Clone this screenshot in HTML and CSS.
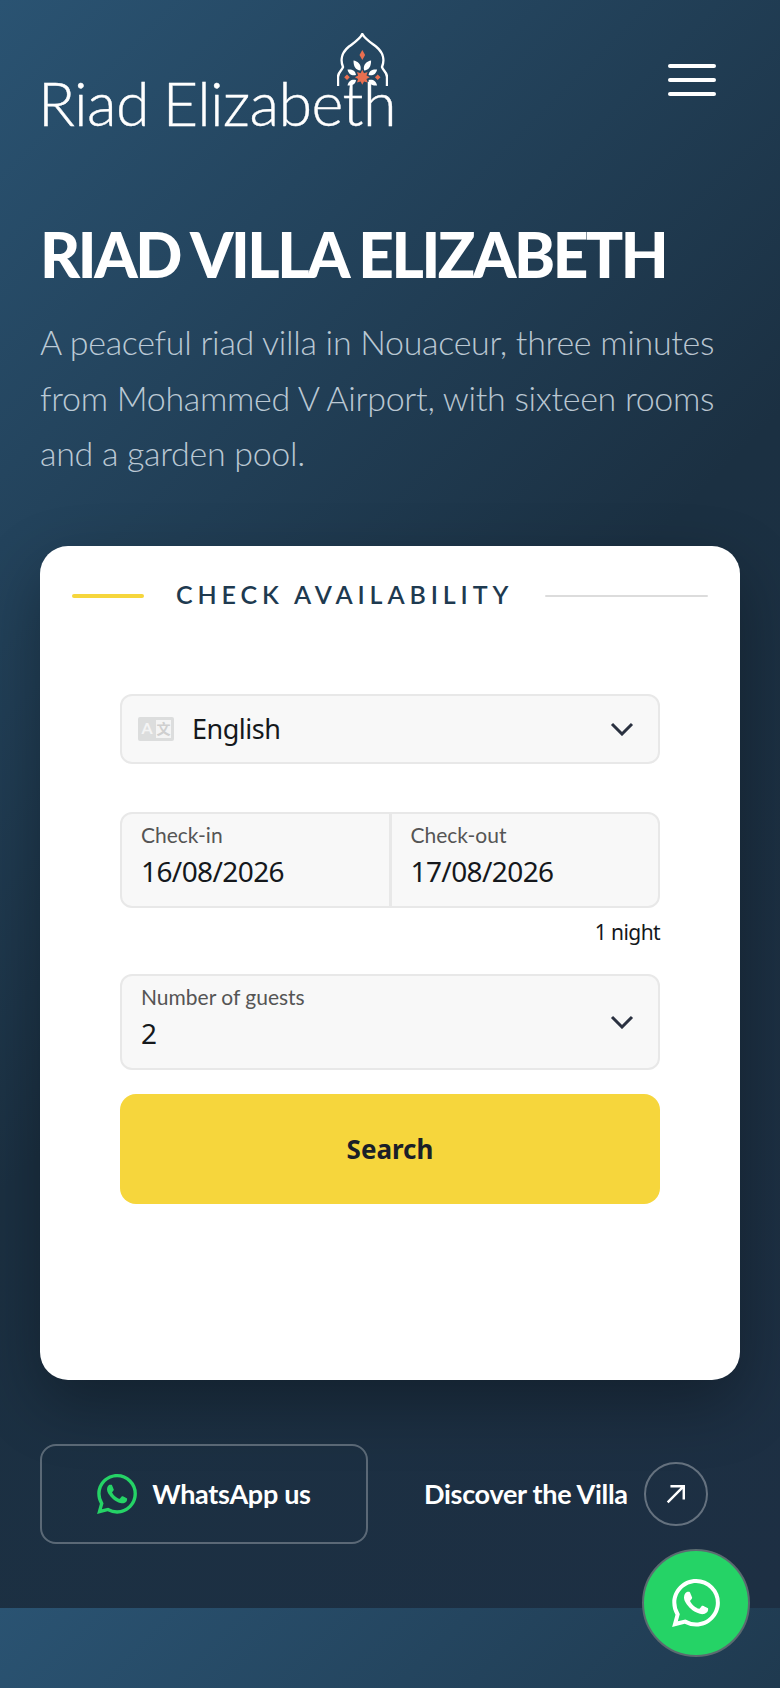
FILE: index.html
```html
<!DOCTYPE html>
<html lang="en">
<head>
<meta charset="utf-8">
<title>Riad Villa Elizabeth</title>
<link rel="stylesheet" href="styles.css">
</head>
<body>
<section class="hero">
  <header class="topbar">
    <a class="logo">
      <span class="logo-text">Riad Elizabeth</span>
      <svg class="logo-mark" viewBox="0 0 51 54" aria-hidden="true">
        <path d="M1 53V44C1 39 5 38 6 34C3.500 28 4 20 12 13.500C18 9 23 6 25.300 1C28 6 33 9 39 13.500C47 20 47.500 28 45 34C46 38 50 39 50 44V53" fill="none" stroke="#fff" stroke-width="2.400"/>
        <path d="M25.300 17l2.800 5-2.800 5-2.800-5z" fill="#e96f50"/>
        <polygon transform="translate(25.300 44.300)" fill="#e96f50" points="7.500,0 4.160,1.720 5.300,5.300 1.720,4.160 0,7.500 -1.720,4.160 -5.300,5.300 -4.160,1.720 -7.500,0 -4.160,-1.720 -5.300,-5.300 -1.720,-4.160 0,-7.500 1.720,-4.160 5.300,-5.300 4.160,-1.720"/>
        <path d="M7.200 44.300l2.800-2.800 2.800 2.800-2.800 2.800zM37.900 44.300l2.800-2.800 2.800 2.800-2.800 2.800z" fill="#e96f50"/>
        <path d="M23.500 37.500c-5-.5-7-4-7-10 4 .5 8.500 4 7 10zM27.100 37.500c-1.500-6 3-9.500 7-10 0 6-2 9.500-7 10zM19 42c-4 1-7.500-.5-8.500-5.500 4.500-.5 8 1 8.500 5.500zM31.600 42c.5-4.500 4-6 8.500-5.500-1 5-4.500 6.500-8.500 5.500zM19 47c-4-1-7.500.5-8.500 5.500 4.500.5 8-1 8.500-5.500zM31.600 47c.5 4.500 4 6 8.500 5.500-1-5-4.500-6.500-8.500-5.500z" fill="#fff"/>
      </svg>
    </a>
    <button class="menu" aria-label="Menu"><span></span><span></span><span></span></button>
  </header>

  <h1 class="title">RIAD VILLA ELIZABETH</h1>
  <p class="lead">A peaceful riad villa in Nouaceur, three minutes from Mohammed V Airport, with sixteen rooms and a garden pool.</p>

  <div class="card">
    <div class="card-head">
      <span class="rule rule-accent"></span>
      <h2 class="card-title">CHECK AVAILABILITY</h2>
      <span class="rule rule-muted"></span>
    </div>
    <form class="form">
      <div class="field field-lang">
        <svg class="lang-icon" viewBox="0 0 36 24" aria-hidden="true">
          <rect width="36" height="24" rx="2" fill="#dcdddd"/>
          <rect x="18" y="3" width="15" height="18" fill="#f4f4f4"/>
          <text x="9" y="17" class="lang-a">A</text>
          <text x="25.500" y="17" class="lang-b">文</text>
        </svg>
        <span class="value value-lang">English</span>
        <svg class="chevron" viewBox="0 0 24 14" fill="none" aria-hidden="true"><path d="M2 2l10 10L22 2" stroke="#2a3140" stroke-width="3"/></svg>
      </div>

      <div class="dates">
        <div class="date">
          <span class="label">Check-in</span>
          <span class="value">16/08/2026</span>
        </div>
        <div class="date">
          <span class="label">Check-out</span>
          <span class="value">17/08/2026</span>
        </div>
      </div>
      <div class="nights">1 night</div>

      <div class="field field-guests">
        <div class="stack">
          <span class="label">Number of guests</span>
          <span class="value">2</span>
        </div>
        <svg class="chevron" viewBox="0 0 24 14" fill="none" aria-hidden="true"><path d="M2 2l10 10L22 2" stroke="#2a3140" stroke-width="3"/></svg>
      </div>

      <button class="search" type="button">Search</button>
    </form>
  </div>

  <div class="actions">
    <a class="btn-whatsapp">
      <svg class="wa-icon" viewBox="0 0 24 24" aria-hidden="true"><path fill="#25d366" d="M17.472 14.382c-.297-.149-1.758-.867-2.03-.967-.273-.099-.471-.148-.67.15-.197.297-.767.966-.94 1.164-.173.199-.347.223-.644.075-.297-.15-1.255-.463-2.39-1.475-.883-.788-1.48-1.761-1.653-2.059-.173-.297-.018-.458.13-.606.134-.133.298-.347.446-.52.149-.174.198-.298.298-.497.099-.198.05-.371-.025-.52-.075-.149-.669-1.612-.916-2.207-.242-.579-.487-.5-.669-.51-.173-.008-.371-.01-.57-.01-.198 0-.52.074-.792.372-.272.297-1.04 1.016-1.04 2.479 0 1.462 1.065 2.875 1.213 3.074.149.198 2.096 3.2 5.077 4.487.709.306 1.262.489 1.694.625.712.227 1.36.195 1.871.118.571-.085 1.758-.719 2.006-1.413.248-.694.248-1.289.173-1.413-.074-.124-.272-.198-.57-.347m-5.421 7.403h-.004a9.87 9.87 0 01-5.031-1.378l-.361-.214-3.741.982.998-3.648-.235-.374a9.86 9.86 0 01-1.51-5.26c.001-5.45 4.436-9.884 9.888-9.884 2.64 0 5.122 1.03 6.988 2.898a9.825 9.825 0 012.893 6.994c-.003 5.45-4.437 9.884-9.885 9.884m8.413-18.297A11.815 11.815 0 0012.05 0C5.495 0 .16 5.335.157 11.892c0 2.096.547 4.142 1.588 5.945L.057 24l6.305-1.654a11.882 11.882 0 005.683 1.448h.005c6.554 0 11.89-5.335 11.893-11.893a11.821 11.821 0 00-3.48-8.413z"/></svg>
      <span>WhatsApp us</span>
    </a>
    <a class="btn-discover">
      <span>Discover the Villa</span>
      <span class="arrow-circle">
        <svg viewBox="0 0 18 18" fill="none" aria-hidden="true"><path d="M1.500 16.500L16 2M4 2h12v12" stroke="#fff" stroke-width="2.200"/></svg>
      </span>
    </a>
  </div>
</section>
<section class="next"></section>

<a class="fab" aria-label="WhatsApp">
  <svg viewBox="0 0 24 24" aria-hidden="true"><path fill="#fff" d="M17.472 14.382c-.297-.149-1.758-.867-2.03-.967-.273-.099-.471-.148-.67.15-.197.297-.767.966-.94 1.164-.173.199-.347.223-.644.075-.297-.15-1.255-.463-2.39-1.475-.883-.788-1.48-1.761-1.653-2.059-.173-.297-.018-.458.13-.606.134-.133.298-.347.446-.52.149-.174.198-.298.298-.497.099-.198.05-.371-.025-.52-.075-.149-.669-1.612-.916-2.207-.242-.579-.487-.5-.669-.51-.173-.008-.371-.01-.57-.01-.198 0-.52.074-.792.372-.272.297-1.04 1.016-1.04 2.479 0 1.462 1.065 2.875 1.213 3.074.149.198 2.096 3.2 5.077 4.487.709.306 1.262.489 1.694.625.712.227 1.36.195 1.871.118.571-.085 1.758-.719 2.006-1.413.248-.694.248-1.289.173-1.413-.074-.124-.272-.198-.57-.347m-5.421 7.403h-.004a9.87 9.87 0 01-5.031-1.378l-.361-.214-3.741.982.998-3.648-.235-.374a9.86 9.86 0 01-1.51-5.26c.001-5.45 4.436-9.884 9.888-9.884 2.64 0 5.122 1.03 6.988 2.898a9.825 9.825 0 012.893 6.994c-.003 5.45-4.437 9.884-9.885 9.884m8.413-18.297A11.815 11.815 0 0012.05 0C5.495 0 .16 5.335.157 11.892c0 2.096.547 4.142 1.588 5.945L.057 24l6.305-1.654a11.882 11.882 0 005.683 1.448h.005c6.554 0 11.89-5.335 11.893-11.893a11.821 11.821 0 00-3.48-8.413z"/></svg>
</a>
</body>
</html>
```
FILE: styles.css
```css
* { box-sizing: border-box; }
html, body { margin: 0; padding: 0; }
body {
  width: 780px;
  height: 1688px;
  overflow: hidden;
  font-family: "Lato", "Liberation Sans", sans-serif;
  background: #1c2f43;
}
.hero, .next {
  background-image: linear-gradient(135deg, #2a5372 0%, #1b3042 50%, #1d2f43 100%);
  background-size: 100% 1608px;
  background-repeat: no-repeat;
}
.hero {
  height: 1608px;
  padding: 0 40px;
  color: #fff;
}
.next { height: 80px; }
.topbar {
  display: flex;
  justify-content: space-between;
  align-items: flex-start;
  height: 219px;
  padding-top: 32px;
}
.logo {
  position: relative;
  display: block;
  width: 353px;
  height: 98px;
}
.logo-text {
  position: absolute;
  left: -2px;
  bottom: -3px;
  font-size: 61px;
  line-height: 1;
  font-weight: 300;
  letter-spacing: -0.6px;
  word-spacing: -2px;
  -webkit-text-stroke: 0.4px #fff;
  white-space: nowrap;
}
.logo-mark {
  position: absolute;
  left: 297px;
  top: 1px;
  width: 51px;
  height: 54px;
}
.menu {
  display: flex;
  flex-direction: column;
  justify-content: space-between;
  width: 48px;
  height: 32px;
  margin: 32px 24px 0 0;
  padding: 0;
  border: 0;
  background: none;
}
.menu span {
  display: block;
  height: 4px;
  border-radius: 2px;
  background: #fff;
}
.title {
  margin: 0;
  font-size: 62px;
  line-height: 70px;
  font-weight: 900;
  letter-spacing: -2.45px;
  white-space: nowrap;
}
.lead {
  margin: 25px 0 0;
  font-size: 34px;
  line-height: 55.500px;
  font-weight: 300;
  letter-spacing: -0.3px;
  color: rgba(230, 240, 248, 0.78);
}
.card {
  height: 834px;
  margin-top: 65px;
  padding: 34px 32px 32px;
  background: #fff;
  border-radius: 28px;
  box-shadow: 0 24px 64px rgba(0, 0, 0, 0.3);
}
.card-head {
  display: flex;
  align-items: center;
  gap: 32px;
}
.rule { display: block; border-radius: 2px; }
.rule-accent { width: 72px; height: 4px; background: #f6d63c; }
.rule-muted { flex: 1; height: 2px; background: #dcdcdc; }
.card-title {
  margin: 0;
  padding-bottom: 4px;
  height: 32px;
  font-size: 25px;
  line-height: 28px;
  font-weight: 600;
  letter-spacing: 4.900px;
  color: #1e3a50;
  white-space: nowrap;
}
.form {
  margin: 82px 48px 0;
  display: flex;
  flex-direction: column;
}
.field, .dates {
  background: #f8f8f8;
  border: 2px solid #e8e8e8;
  border-radius: 12px;
}
.field {
  display: flex;
  align-items: center;
  justify-content: space-between;
}
.value {
  font-family: "Noto Sans", "Open Sans", sans-serif;
  font-size: 28px;
  line-height: 36px;
  letter-spacing: -0.6px;
  color: #15181c;
}
.value-lang { flex: 1; font-size: 27px; letter-spacing: -0.5px; }
.label {
  font-size: 21px;
  line-height: 26px;
  color: #555;
}
.field-lang {
  height: 70px;
  padding: 0 24px 0 16px;
  margin-bottom: 48px;
}
.lang-icon { width: 36px; height: 24px; margin-right: 18px; }
.lang-a { font: 700 16px "Lato", sans-serif; fill: #f4f4f4; text-anchor: middle; }
.lang-b { font: 700 14px "Noto Sans CJK SC", sans-serif; fill: #cfcfcf; text-anchor: middle; }
.chevron { width: 24px; height: 14px; flex: none; }
.dates {
  display: flex;
  height: 96px;
}
.date {
  flex: 1;
  display: flex;
  flex-direction: column;
  padding: 8px 19px;
}
.date + .date { border-left: 3px solid #e8e8e8; }
.date .value { margin-top: 5px; }
.nights {
  margin: 10px 0 28px;
  text-align: right;
  font-family: "Noto Sans", "Open Sans", sans-serif;
  font-size: 21px;
  line-height: 28px;
  letter-spacing: -0.6px;
  color: #15181c;
}
.field-guests {
  height: 96px;
  padding: 0 24px 0 19px;
}
.stack { display: flex; flex-direction: column; align-self: flex-start; padding-top: 8px; }
.stack .value { margin-top: 5px; }
.search {
  height: 110px;
  margin-top: 24px;
  border: 0;
  border-radius: 16px;
  background: #f6d63c;
  font-family: "Noto Sans", "Open Sans", sans-serif;
  font-size: 26px;
  font-weight: 700;
  color: #1a2028;
}
.actions {
  display: flex;
  align-items: center;
  margin-top: 64px;
}
.btn-whatsapp {
  display: flex;
  align-items: center;
  justify-content: center;
  gap: 15px;
  width: 328px;
  height: 100px;
  border: 2px solid rgba(255, 255, 255, 0.28);
  border-radius: 16px;
  font-size: 27px;
  font-weight: 700;
  letter-spacing: -0.3px;
}
.wa-icon { width: 40px; height: 40px; }
.btn-discover {
  display: flex;
  align-items: center;
  gap: 16px;
  margin-left: 56px;
  font-size: 27px;
  font-weight: 700;
  letter-spacing: -0.3px;
}
.arrow-circle {
  display: flex;
  align-items: center;
  justify-content: center;
  width: 64px;
  height: 64px;
  border: 2px solid rgba(255, 255, 255, 0.32);
  border-radius: 50%;
}
.arrow-circle svg { width: 20px; height: 20px; }
.fab {
  position: fixed;
  left: 642px;
  top: 1549px;
  display: flex;
  align-items: center;
  justify-content: center;
  width: 108px;
  height: 108px;
  border: 2px solid #5b6b70;
  border-radius: 50%;
  background: #25d366;
}
.fab svg { width: 48px; height: 48px; }
```
